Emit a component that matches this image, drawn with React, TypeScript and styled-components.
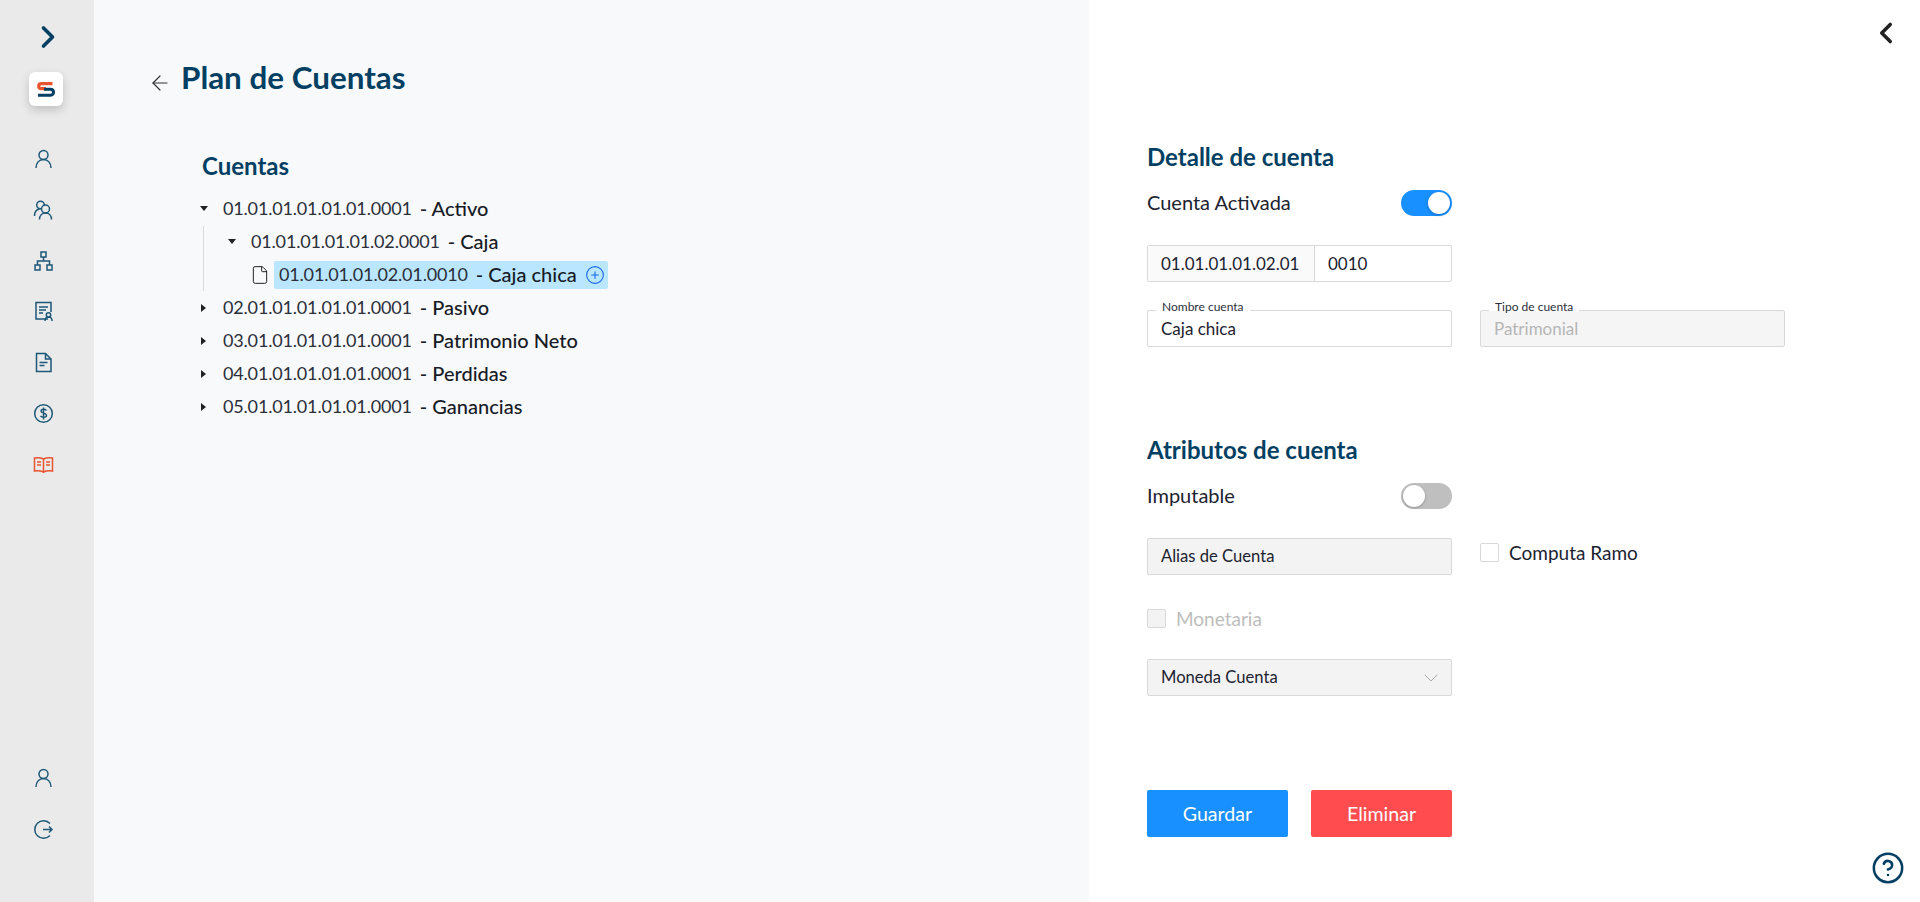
import React from 'react';
import styled, { createGlobalStyle } from 'styled-components';
import { ArrowLeft, ChevronDown, ChevronLeft, ChevronRight, CirclePlus, File, CircleHelp } from 'lucide-react';

const NAVY = '#023f63';
const ICON = '#1d5878';
const ORANGE = '#e9532d';
const BORDER = '#d9d9d9';

const GlobalStyle = createGlobalStyle`
  html, body {
    margin: 0;
    padding: 0;
    height: 100%;
  }
  body {
    font-family: Lato, "Open Sans", sans-serif;
    color: #1c2230;
    background: #fff;
  }
  * { box-sizing: border-box; }
`;

const Page = styled.div`
  display: flex;
  height: 902px;
  overflow: hidden;
`;

/* sidebar */
const Sidebar = styled.aside`
  width: 94px;
  flex: none;
  background: #eaeaea;
  display: flex;
  flex-direction: column;
  padding-bottom: 60px;
`;

const ExpandButton = styled.div`
  height: 72px;
  padding: 19px 0 0 30px;
  color: ${NAVY};
`;

const Logo = styled.div`
  width: 34px;
  height: 34px;
  margin-left: 29px;
  border-radius: 6px;
  background: #fff;
  box-shadow: 0 4px 10px rgba(0, 0, 0, 0.18);
  display: flex;
  align-items: center;
  justify-content: center;
`;

const NavList = styled.nav`
  display: flex;
  flex-direction: column;
  gap: 25.8px;
  padding: 41px 0 0 31px;
`;

const BottomNav = styled(NavList)`
  margin-top: auto;
  padding-top: 0;
`;

const NavIcon = styled.svg<{ $active?: boolean }>`
  display: block;
  width: 25px;
  height: 25px;
  fill: none;
  stroke: ${(p) => (p.$active ? ORANGE : ICON)};
  stroke-width: 1.5;
`;

/* tree column */
const TreePanel = styled.main`
  width: 995px;
  flex: none;
  background: #f8f9fb;
  padding: 58px 0 0 58px;
`;

const TitleRow = styled.div`
  display: flex;
  align-items: flex-start;
  gap: 9px;
  color: #333;
`;

const BackIcon = styled(ArrowLeft)`
  margin: 13px 0 0 -4px;
  flex: none;
`;

const Title = styled.h1`
  margin: 0;
  font-size: 31.4px;
  line-height: 38px;
  font-weight: 700;
  color: ${NAVY};
`;

const TreeBlock = styled.section`
  margin: 55px 0 0 50px;
`;

const SectionTitle = styled.h2`
  margin: 0;
  font-size: 24px;
  line-height: 30px;
  font-weight: 700;
  color: ${NAVY};
`;

const Tree = styled.div`
  position: relative;
  margin-top: 11px;
`;

const TreeRow = styled.div<{ $level: number }>`
  display: flex;
  align-items: center;
  height: 33px;
  padding-left: ${(p) => p.$level * 28}px;
  font-size: 18px;
`;

const Guide = styled.div`
  position: absolute;
  left: 1px;
  top: 34px;
  width: 1px;
  height: 65px;
  background: ${BORDER};
`;

const CaretBox = styled.span`
  width: 21px;
  flex: none;
  display: flex;
`;

const Caret = styled.i<{ $open?: boolean }>`
  display: block;
  width: 0;
  height: 0;
  ${(p) =>
    p.$open
      ? `margin-left: -2px;
         border-left: 4px solid transparent;
         border-right: 4px solid transparent;
         border-top: 5px solid #222;`
      : `margin-left: -1px;
         border-top: 4px solid transparent;
         border-bottom: 4px solid transparent;
         border-left: 5px solid #222;`}
`;

const Code = styled.span`
  margin-bottom: 2px;
  font-weight: 400;
  letter-spacing: -0.17px;
  color: #2b2f3a;
`;

const Name = styled.span`
  margin: 0 0 2px 8px;
  font-size: 20px;
  font-weight: 500;
  color: #171b26;
`;

const LeafIcon = styled(File)`
  flex: none;
  margin: 0 4px 0 -8px;
  color: #222;
`;

const Selected = styled.div`
  display: flex;
  align-items: center;
  height: 28px;
  width: 334px;
  padding: 0 3.5px 0 5px;
  border-radius: 2px;
  background: #bae7ff;
`;

const AddIcon = styled(CirclePlus)`
  margin-left: auto;
  color: #1668e8;
`;

/* detail column */
const DetailPanel = styled.section`
  position: relative;
  flex: 1;
  padding: 142px 0 0 58px;
`;

const CollapseIcon = styled(ChevronLeft)`
  position: absolute;
  top: 15.5px;
  right: 17px;
  color: #222;
`;

const HelpIcon = styled(CircleHelp)`
  position: absolute;
  right: 15px;
  bottom: 17px;
  color: ${NAVY};
`;

const SwitchRow = styled.div`
  display: flex;
  align-items: center;
  justify-content: space-between;
  width: 305px;
  height: 26px;
  margin-top: 18px;
  font-size: 20px;
`;

const SwitchText = styled.span`
  margin-top: -2px;
`;

const Switch = styled.span<{ $on?: boolean }>`
  display: flex;
  justify-content: ${(p) => (p.$on ? 'flex-end' : 'flex-start')};
  width: 51px;
  height: 26px;
  padding: 2px;
  border-radius: 13px;
  background: ${(p) => (p.$on ? '#1890ff' : '#bfbfbf')};
`;

const Knob = styled.i`
  display: block;
  width: 22px;
  height: 22px;
  border-radius: 50%;
  background: #fff;
  box-shadow: 0 1px 3px rgba(0, 0, 0, 0.25);
`;

const Group = styled.div`
  display: flex;
  width: 305px;
  height: 37px;
  margin-top: 29px;
  border: 1px solid ${BORDER};
  border-radius: 2px;
  font-size: 17px;
  line-height: 35px;
`;

const Prefix = styled.div`
  width: 167px;
  padding-left: 13px;
  background: #fafafa;
  border-right: 1px solid ${BORDER};
`;

const Suffix = styled.div`
  padding-left: 13px;
`;

const FieldRow = styled.div`
  display: flex;
  gap: 28px;
  margin-top: 28px;
`;

const Field = styled.div<{ $disabled?: boolean }>`
  position: relative;
  width: 305px;
  height: 37px;
  padding-left: 13px;
  border: 1px solid ${BORDER};
  border-radius: 2px;
  font-size: 17px;
  line-height: 35px;
  background: ${(p) => (p.$disabled ? '#f5f5f5' : '#fff')};
  color: ${(p) => (p.$disabled ? '#b5b5b5' : 'inherit')};
`;

const FloatLabel = styled.label`
  position: absolute;
  left: 8px;
  top: -12px;
  padding: 0 6px;
  background: linear-gradient(#fff 12px, transparent 12px);
  font-size: 12px;
  line-height: 16px;
  color: #2b2f3a;
`;

const AttributesTitle = styled(SectionTitle)`
  margin-top: 88px;
`;

const AliasRow = styled.div`
  display: flex;
  gap: 28px;
  margin-top: 29px;
`;

const GreyBox = styled.div`
  display: flex;
  align-items: center;
  justify-content: space-between;
  width: 305px;
  height: 37px;
  padding: 0 13px 2px;
  border: 1px solid ${BORDER};
  border-radius: 2px;
  font-size: 16.6px;
  background: #f3f3f3;
`;

const CheckLabel = styled.div<{ $disabled?: boolean }>`
  display: flex;
  align-items: center;
  gap: 10px;
  height: 19px;
  font-size: 19px;
  color: ${(p) => (p.$disabled ? '#bdbdbd' : 'inherit')};
`;

const ComputaLabel = styled(CheckLabel)`
  margin-top: 5px;
`;

const MonetariaLabel = styled(CheckLabel)`
  margin-top: 34px;
`;

const Box = styled.i<{ $disabled?: boolean }>`
  display: block;
  width: 19px;
  height: 19px;
  border: 1px solid ${BORDER};
  border-radius: 2px;
  background: ${(p) => (p.$disabled ? '#f3f3f3' : '#fff')};
`;

const SelectBox = styled(GreyBox)`
  margin-top: 31px;
  color: #1c2230;
`;

const SelectChevron = styled(ChevronDown)`
  margin: 2px -5px 0 0;
  color: #aaa;
`;

const Actions = styled.div`
  display: flex;
  gap: 23px;
  margin-top: 94px;
`;

const Button = styled.button<{ $danger?: boolean }>`
  width: 141px;
  height: 47px;
  border: 0;
  border-radius: 2px;
  font-family: inherit;
  font-size: 19.6px;
  font-weight: 400;
  color: #fff;
  background: ${(p) => (p.$danger ? '#ff4d4f' : '#1890ff')};
`;

const accounts = [
  { code: '02.01.01.01.01.01.0001', name: 'Pasivo' },
  { code: '03.01.01.01.01.01.0001', name: 'Patrimonio Neto' },
  { code: '04.01.01.01.01.01.0001', name: 'Perdidas' },
  { code: '05.01.01.01.01.01.0001', name: 'Ganancias' },
];

const SLogo = () => (
  <svg width="18" height="15" viewBox="0 0 18 15">
    <path d="M15.500 1.700H4.500C.8 1.700.8 6.600 4.500 6.600H9" fill="none" stroke={ORANGE} strokeWidth="3.200" />
    <path d="M7 7.200h6.500c4 0 4 6.100 0 6.100H1" fill="none" stroke={NAVY} strokeWidth="3" />
  </svg>
);

const App = () => (
  <Page>
    <GlobalStyle />
    <Sidebar>
      <ExpandButton>
        <ChevronRight size={36} strokeWidth={2.4} />
      </ExpandButton>
      <Logo>
        <SLogo />
      </Logo>
      <NavList>
        <NavIcon viewBox="0 0 25 25">
          <circle cx="12.5" cy="8" r="4.5" />
          <path d="M5 21c0-5 3-8.500 7.500-8.500S20 16 20 21" />
        </NavIcon>
        <NavIcon viewBox="0 0 25 25">
          <circle cx="9.500" cy="7" r="3.800" />
          <path d="M3.500 18c0-4 2-6.500 5-7" />
          <circle cx="14.500" cy="11" r="4" fill="#eaeaea" />
          <path d="M8.500 21.500c0-4 2.500-6.500 6-6.500s6 2.500 6 6.500" />
        </NavIcon>
        <NavIcon viewBox="0 0 25 25">
          <rect x="10" y="3" width="5" height="5" />
          <rect x="4" y="16" width="5" height="5" />
          <rect x="16" y="16" width="5" height="5" />
          <path d="M12.500 8v4M6.500 16v-4h12v4" />
        </NavIcon>
        <NavIcon viewBox="0 0 25 25">
          <path d="M17 20H5V3.500h15V13" />
          <path d="M8 8h9M8 11h7M8 14h4" />
          <circle cx="17.500" cy="16" r="2.200" />
          <path d="M14 22c0-3 1.500-4 3.500-4s3.500 1 3.500 4" />
        </NavIcon>
        <NavIcon viewBox="0 0 25 25">
          <path d="M5.500 3.500h9l5.500 5.500v12.500H5.500z" />
          <path d="M14.500 3.500V9H20M8.500 12.500h8M8.500 15.500h5" />
        </NavIcon>
        <NavIcon viewBox="0 0 25 25">
          <circle cx="12.500" cy="12.500" r="8.800" />
          <path d="M15.500 9.500c-.5-1.500-5.500-2-5.500.5 0 2.700 5.500 1.500 5.500 4.500 0 2.500-5 2-6 .3M12.500 6.500v12" />
        </NavIcon>
        <NavIcon $active viewBox="0 0 25 25">
          <path d="M12.500 7c-2-1-6-1.500-9-1v13c3-.5 7 0 9 1 2-1 6-1.500 9-1V6c-3-.5-7 0-9 1zM12.500 7v14" />
          <path d="M6 10h4M6 13h4M15 10h4M15 13h4" />
        </NavIcon>
      </NavList>
      <BottomNav>
        <NavIcon viewBox="0 0 25 25">
          <circle cx="12.500" cy="8" r="4.500" />
          <path d="M5 21c0-5 3-8.500 7.500-8.500S20 16 20 21" />
        </NavIcon>
        <NavIcon viewBox="0 0 25 25">
          <path d="M19 6.500A8.800 8.800 0 1 0 19 18.500" />
          <path d="M12 12.500h9M18 9.500l3 3-3 3" />
        </NavIcon>
      </BottomNav>
    </Sidebar>

    <TreePanel>
      <TitleRow>
        <BackIcon size={24} strokeWidth={1.2} />
        <Title>Plan de Cuentas</Title>
      </TitleRow>
      <TreeBlock>
        <SectionTitle>Cuentas</SectionTitle>
        <Tree>
          <Guide />
          <TreeRow $level={0}>
            <CaretBox><Caret $open /></CaretBox>
            <Code>01.01.01.01.01.01.0001</Code>
            <Name>- Activo</Name>
          </TreeRow>
          <TreeRow $level={1}>
            <CaretBox><Caret $open /></CaretBox>
            <Code>01.01.01.01.01.02.0001</Code>
            <Name>- Caja</Name>
          </TreeRow>
          <TreeRow $level={2}>
            <LeafIcon size={20} strokeWidth={1.2} />
            <Selected>
              <Code>01.01.01.01.02.01.0010</Code>
              <Name>- Caja chica</Name>
              <AddIcon size={20} strokeWidth={1.3} />
            </Selected>
          </TreeRow>
          {accounts.map((a) => (
            <TreeRow $level={0} key={a.code}>
              <CaretBox><Caret /></CaretBox>
              <Code>{a.code}</Code>
              <Name>- {a.name}</Name>
            </TreeRow>
          ))}
        </Tree>
      </TreeBlock>
    </TreePanel>

    <DetailPanel>
      <CollapseIcon size={34} strokeWidth={2.5} />
      <SectionTitle>Detalle de cuenta</SectionTitle>
      <SwitchRow>
        <SwitchText>Cuenta Activada</SwitchText>
        <Switch $on><Knob /></Switch>
      </SwitchRow>
      <Group>
        <Prefix>01.01.01.01.02.01</Prefix>
        <Suffix>0010</Suffix>
      </Group>
      <FieldRow>
        <Field>
          <FloatLabel>Nombre cuenta</FloatLabel>
          Caja chica
        </Field>
        <Field $disabled>
          <FloatLabel>Tipo de cuenta</FloatLabel>
          Patrimonial
        </Field>
      </FieldRow>

      <AttributesTitle>Atributos de cuenta</AttributesTitle>
      <SwitchRow>
        <SwitchText>Imputable</SwitchText>
        <Switch><Knob /></Switch>
      </SwitchRow>
      <AliasRow>
        <GreyBox>Alias de Cuenta</GreyBox>
        <ComputaLabel><Box />Computa Ramo</ComputaLabel>
      </AliasRow>
      <MonetariaLabel $disabled><Box $disabled />Monetaria</MonetariaLabel>
      <SelectBox>
        Moneda Cuenta
        <SelectChevron size={24} strokeWidth={1} />
      </SelectBox>
      <Actions>
        <Button>Guardar</Button>
        <Button $danger>Eliminar</Button>
      </Actions>
      <HelpIcon size={34} strokeWidth={1.8} />
    </DetailPanel>
  </Page>
);

export default App;
